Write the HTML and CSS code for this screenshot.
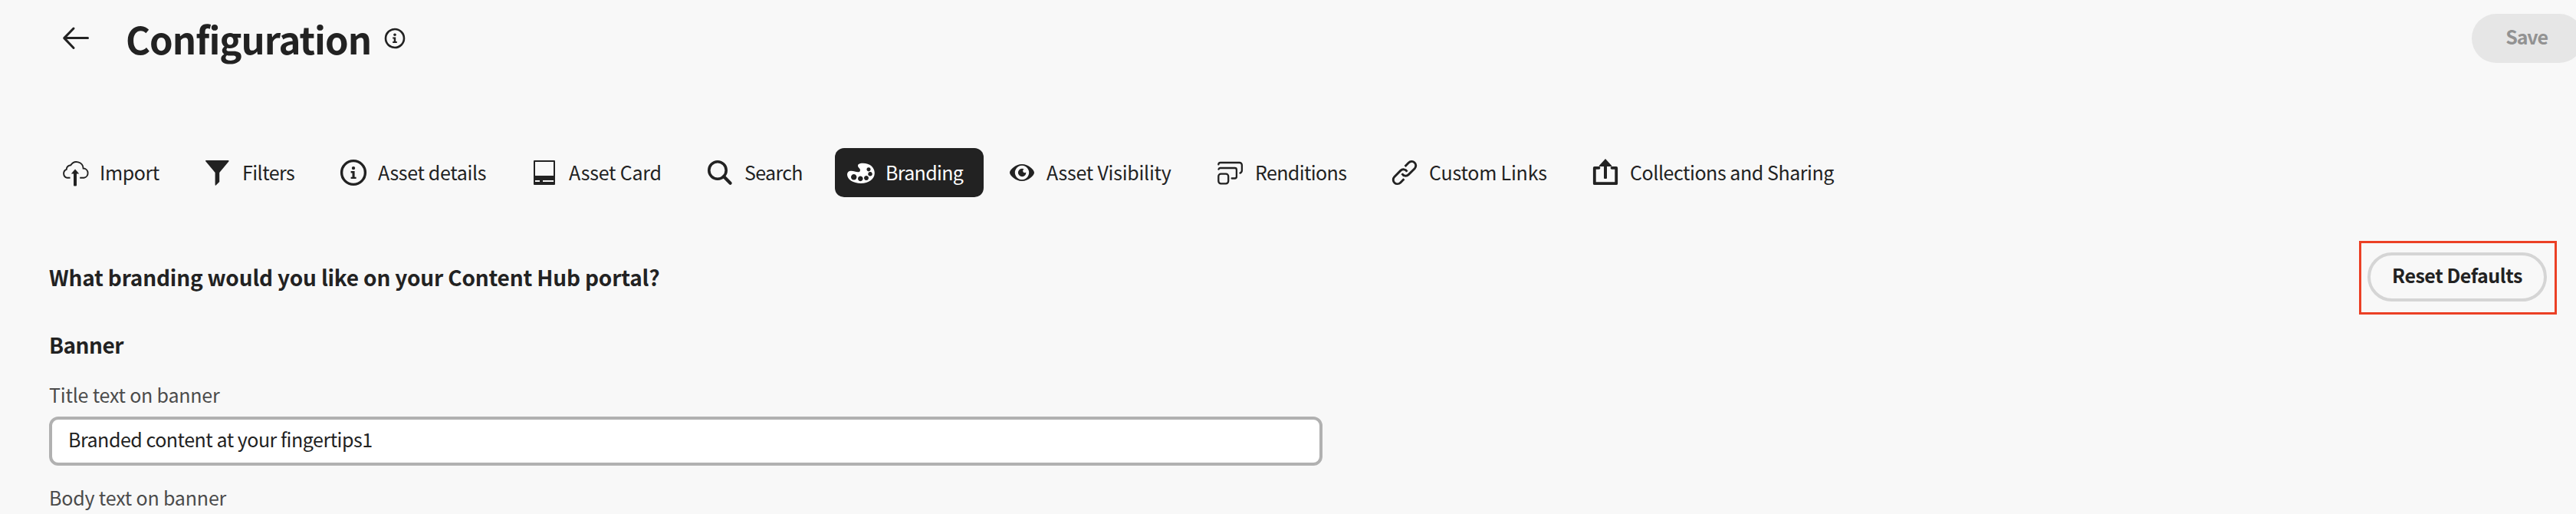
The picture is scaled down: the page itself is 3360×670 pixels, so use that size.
FILE: index.html
```html
<!DOCTYPE html>
<html lang="en">
<head>
<meta charset="utf-8">
<title>Configuration</title>
<link rel="stylesheet" href="styles.css">
</head>
<body>
<header class="header">
  <svg class="back" width="36" height="36" viewBox="0 0 36 36"><path d="M33.5 17.6H3M15 5 2.700 17.600 15 30.500" fill="none" stroke="currentColor" stroke-width="3" stroke-linecap="round" stroke-linejoin="round"/></svg>
  <h1 class="title">Configuration</h1>
  <svg class="info" width="28" height="28" viewBox="0 0 28 28"><circle cx="14" cy="14" r="12" fill="none" stroke="currentColor" stroke-width="2.600"/><circle cx="14" cy="9.300" r="1.800"/><path d="M11.200 12.500h4v5.500h1.600v2h-5.600v-2h1.500v-3.600h-1.500z"/></svg>
  <button class="save">Save</button>
</header>

<nav class="tabs">
  <a class="tab import"><svg class="icon" viewBox="0 0 36 36"><path d="M11.500 24.800H7.500A5.800 5.800 0 0 1 6.700 13.800Q7 9 12.300 8.300A8.800 8.800 0 0 1 28.600 12.500A6.200 6.200 0 0 1 29.500 24.800H24.200" fill="none" stroke="currentColor" stroke-width="1.900"/><path d="M18 13.500 23.200 19.500H20v15a1 1 0 0 1-1 1h-2a1 1 0 0 1-1-1v-15h-3.200z"/></svg><span>Import</span></a>
  <a class="tab filters"><svg class="icon" viewBox="0 0 36 36"><path d="M2.800 2h29a.8.8 0 0 1 .7 1.200L20.200 18v12l-4.300 4.300a.7.700 0 0 1-1.300-.5V18L2.200 3.200A.8.800 0 0 1 2.800 2z"/></svg><span>Filters</span></a>
  <a class="tab details"><svg class="icon" viewBox="0 0 36 36"><circle cx="18" cy="18" r="15.400" fill="none" stroke="currentColor" stroke-width="3.400"/><circle cx="18" cy="12.100" r="2.200"/><path d="M14.600 16h5v7.700h2v2.400h-7v-2.400h1.900v-5.300h-1.900z"/></svg><span>Asset details</span></a>
  <a class="tab card"><svg class="icon" viewBox="0 0 36 36"><path fill-rule="evenodd" d="M5 2h26a1 1 0 0 1 1 1v30a1 1 0 0 1-1 1H5a1 1 0 0 1-1-1V3a1 1 0 0 1 1-1zM6 4v18h24V4zM6 28v2h6v-2zM16 28v2h14v-2z"/></svg><span>Asset Card</span></a>
  <a class="tab search"><svg class="icon" viewBox="0 0 36 36"><circle cx="15" cy="15" r="11.200" fill="none" stroke="currentColor" stroke-width="3.600"/><path d="M23 23l8.600 8.700" stroke="currentColor" stroke-width="4.200" stroke-linecap="round"/></svg><span>Search</span></a>
  <a class="tab branding active"><svg class="icon" viewBox="0 0 36 36"><path fill-rule="evenodd" d="M20 5.800C29 5.500 35.800 11 35.800 18.500C35.800 26.500 28 32 18 32C8 32 0 27 0 20.500C0 17.500 2 15.800 5 15.800C9 15.800 11 17.300 14 17.300C16 17.300 17 16.500 17 14.500C17 12.500 14 11.500 14 9C14 7 16.500 5.900 20 5.800zM8.700 20.100a3.700 3.700 0 1 0 .01 0zM17.300 22.600a3.300 3.300 0 1 0 .01 0zM25 22a3 3 0 1 0 .01 0zM30 17a2.800 2.800 0 1 0 .01 0zM28 11.200a2.600 2.600 0 1 0 .01 0z"/></svg><span>Branding</span></a>
  <a class="tab visibility"><svg class="icon" viewBox="0 0 36 36"><path fill-rule="evenodd" d="M18 7C26.500 7 34 14.500 34 18C34 21.500 26.500 29 18 29C9.500 29 2 21.500 2 18C2 14.500 9.500 7 18 7zM18 8.800a9.200 9.200 0 1 0 .01 0z"/><path d="M18 12.800c1 0 1.800.2 2.600.5a2.500 2.500 0 0 0-1.400 2.300 2.600 2.600 0 0 0 2.600 2.600c.6 0 1.100-.2 1.500-.6a5.200 5.200 0 1 1-5.300-4.800z"/></svg><span>Asset Visibility</span></a>
  <a class="tab renditions"><svg class="icon" viewBox="0 0 36 36"><g fill="none" stroke="currentColor" stroke-width="2.300" stroke-linecap="round"><rect x="2.300" y="19.600" width="12.900" height="12.700" rx="3.200"/><path d="M2.500 13.600a2.300 2.300 0 0 1 2-1.600H23.600a2.300 2.300 0 0 1 2.300 2.300V23.200a2.300 2.300 0 0 1-2.300 2.300H19.700"/><path d="M2.300 7.400a2.600 2.600 0 0 1 2.500-2.400H29.700a3.200 3.200 0 0 1 3.200 3.200V15a3.800 3.800 0 0 1-2.400 3.600"/></g></svg><span>Renditions</span></a>
  <a class="tab links"><svg class="icon" viewBox="0 0 36 36"><g fill="none" stroke="currentColor" stroke-width="2.900"><path d="M18.600 10 23.200 5.300C25.500 3 29 3 31.100 5C33.300 7 33.300 10.500 31.200 12.700L23.200 20.600C20.800 22.900 16.600 22.900 14.600 19.300"/><path d="M17.400 26.200 12.800 30.900C10.500 33.200 7 33.200 4.900 31.200C2.700 29.200 2.700 25.700 4.800 23.500L12.800 15.400C15.200 13.100 19.400 13.100 21.400 16.700"/></g></svg><span>Custom Links</span></a>
  <a class="tab sharing"><svg class="icon" viewBox="0 0 36 36"><path d="M18 0 26 8.800a.6.600 0 0 1-.4 1.100H20V25a1 1 0 0 1-1 1h-2a1 1 0 0 1-1-1V9.900H10.400A.6.600 0 0 1 10 8.800z"/><path d="M9.500 11.800H3.800V32.200H32.200V11.800H26.500" fill="none" stroke="currentColor" stroke-width="3.800" stroke-linejoin="round" stroke-linecap="round"/></svg><span>Collections and Sharing</span></a>
</nav>

<main>
  <div class="intro">
    <h2 class="question">What branding would you like on your Content Hub portal?</h2>
    <div class="callout"><button class="reset">Reset Defaults</button></div>
  </div>
  <h3 class="section">Banner</h3>
  <label class="label label-title" for="banner-title">Title text on banner</label>
  <input class="field" id="banner-title" type="text" value="Branded content at your fingertips1">
  <label class="label label-body">Body text on banner</label>
</main>
</body>
</html>
```
FILE: styles.css
```css
* { box-sizing: border-box; }

body {
  margin: 0;
  height: 670px;
  overflow: hidden;
  background: #f8f8f8;
  color: #222;
  font: 25px/28px "Noto Sans CJK SC", "Noto Sans", sans-serif;
}

h1, h2, h3 { margin: 0; font-weight: 700; }
svg { fill: currentColor; flex: none; display: block; }
button, input { font: inherit; color: inherit; margin: 0; }

.header {
  display: flex;
  align-items: center;
  height: 82px;
  padding: 18px 0 0 81px;
}
.title {
  margin-left: 47px;
  width: 336px;
  font-size: 49px;
  line-height: 64px;
  letter-spacing: -1.02px;
  white-space: nowrap;
}
.info { margin-left: 1px; }
.save {
  flex: none;
  width: 146px;
  height: 64px;
  margin: 0 -10px 0 auto;
  padding: 0 3px 6px 0;
  border: 0;
  border-radius: 32px;
  background: #e6e6e6;
  color: #929292;
  font-weight: 700;
  letter-spacing: -1.1px;
}

.tabs {
  display: grid;
  grid-template-columns: 170px 161px 233px 213px 168px 194px 256px 211px 246px 356px;
  column-gap: 16px;
  margin: 111px 0 0 64px;
}
.tab {
  display: flex;
  align-items: center;
  gap: 14px;
  height: 64px;
  padding-left: 16px;
  border-radius: 12px;
  white-space: nowrap;
}
.tab span { padding-bottom: 2px; }
.icon { width: 36px; height: 36px; }
.active { background: #222; color: #fff; }
.import { letter-spacing: -0.4px; }
.filters { letter-spacing: -0.55px; }
.details { letter-spacing: -0.34px; }
.card { letter-spacing: -0.2px; }
.search { letter-spacing: -0.67px; }
.branding { letter-spacing: -0.66px; }
.visibility { letter-spacing: -0.24px; }
.renditions { letter-spacing: -0.62px; }
.links { letter-spacing: -0.2px; }
.sharing { letter-spacing: -0.44px; }

main { padding: 57px 25px 0 64px; }
.intro {
  display: flex;
  justify-content: space-between;
  align-items: center;
}
.question {
  padding-bottom: 3px;
  font-size: 28px;
  letter-spacing: -0.18px;
}
.callout {
  width: 258px;
  height: 96px;
  padding: 12px 10px 14px 8px;
  border: 3px solid #eb4025;
}
.reset {
  display: block;
  width: 234px;
  height: 64px;
  padding: 0 0 6px;
  border: 4px solid #d5d5d5;
  border-radius: 32px;
  background: transparent;
  font-weight: 700;
  letter-spacing: -0.46px;
}
.section {
  margin-top: 25px;
  font-size: 28px;
  letter-spacing: -0.5px;
}
.label { display: block; color: #4b4b4b; }
.label-title { margin-top: 37px; letter-spacing: -0.2px; }
.label-body { margin-top: 27px; letter-spacing: -0.17px; }
.field {
  display: block;
  width: 1661px;
  height: 64px;
  margin-top: 15px;
  padding: 0 21px 6px;
  border: 4px solid #b1b1b1;
  border-radius: 12px;
  background: #fff;
  letter-spacing: -0.47px;
}
```
